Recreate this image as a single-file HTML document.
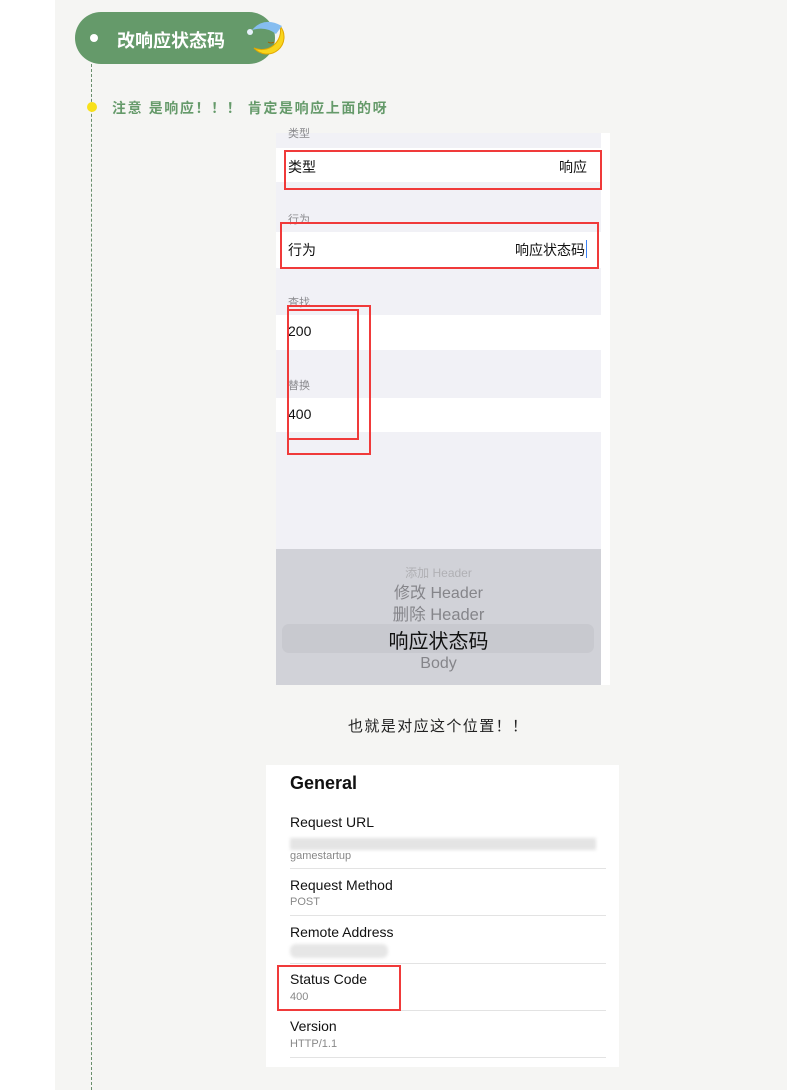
<!DOCTYPE html>
<html><head><meta charset="utf-8"><style>
*{margin:0;padding:0;box-sizing:border-box}
body{width:787px;height:1090px;position:relative;background:#fff;font-family:"Liberation Sans","Noto Sans CJK SC",sans-serif;overflow:hidden}
.a{position:absolute}
.bg{left:55px;top:0;width:732px;height:1090px;background:#f5f5f3}
.dash{left:91px;top:64px;height:1026px;border-left:1px dashed #6a8f6c}
.pill{left:75px;top:12px;width:200px;height:52px;background:#659a6a;border-radius:26px}
.rb{border:2px solid #f03a3a}
.lbl{font-size:11px;color:#8a8a8e}
.row{background:#fff;left:276px;width:325px}
.t{font-size:14px;color:#111}
.k{font-size:14px;color:#111;left:290px}
.v{font-size:11px;color:#888;left:290px}
.sep{left:290px;width:316px;height:1px;background:#e3e3e3}
</style></head><body>
<div class="a bg"></div>
<div class="a dash"></div>
<div class="a pill"></div>
<div class="a" style="left:90px;top:34px;width:8px;height:8px;border-radius:50%;background:#fff"></div>
<div class="a" style="left:117px;top:27px;font-size:18px;font-weight:bold;color:#fff">改响应状态码</div>
<svg class="a" style="left:240px;top:12px" width="50" height="52" viewBox="0 0 50 52">
<path d="M14 36 A17 17 0 1 0 40 14 A19 19 0 0 1 14 36Z" fill="#f9d51c" stroke="#e2a800" stroke-width="1"/>
<path d="M12 18 Q24 4 42 14 L36 22 Q26 14 12 18Z" fill="#86bdf0"/>
<circle cx="10" cy="20" r="3" fill="#e8f2fb"/>
<path d="M28 30 q3 2 6 0" stroke="#a06000" fill="none"/>
</svg>
<div class="a" style="left:87px;top:102px;width:10px;height:10px;border-radius:50%;background:#f8e11a"></div>
<div class="a" style="left:112px;top:98px;font-size:14px;letter-spacing:1.6px;font-weight:bold;color:#659a6a">注意 是响应！！！ 肯定是响应上面的呀</div>

<div class="a" style="left:276px;top:133px;width:334px;height:552px;background:#fff"></div>
<div class="a" style="left:276px;top:133px;width:325px;height:416px;background:#f1f1f6"></div>
<div class="a lbl" style="left:288px;top:125px">类型</div>
<div class="a row" style="top:148px;height:34px"></div>
<div class="a t" style="left:288px;top:157px">类型</div>
<div class="a t" style="left:559px;top:157px">响应</div>
<div class="a lbl" style="left:288px;top:211px">行为</div>
<div class="a row" style="top:232px;height:36px"></div>
<div class="a t" style="left:288px;top:240px">行为</div>
<div class="a t" style="left:515px;top:240px">响应状态码</div>
<div class="a" style="left:586px;top:240px;width:1px;height:18px;background:#3b82f6"></div>
<div class="a lbl" style="left:288px;top:294px">查找</div>
<div class="a row" style="top:315px;height:35px"></div>
<div class="a t" style="left:288px;top:323px">200</div>
<div class="a lbl" style="left:288px;top:377px">替换</div>
<div class="a row" style="top:398px;height:34px"></div>
<div class="a t" style="left:288px;top:406px">400</div>
<div class="a" style="left:276px;top:549px;width:325px;height:136px;background:#d1d2d8"></div>
<div class="a" style="left:282px;top:624px;width:312px;height:29px;border-radius:7px;background:#c8c9cf"></div>
<div class="a" style="left:276px;top:566px;width:325px;text-align:center;font-size:12px;color:#b0b0b4;line-height:14px">添加 Header</div>
<div class="a" style="left:276px;top:579px;width:325px;text-align:center;font-size:16px;color:#85858a">修改 Header</div>
<div class="a" style="left:276px;top:601px;width:325px;text-align:center;font-size:16.5px;color:#85858a">删除 Header</div>
<div class="a" style="left:276px;top:625px;width:325px;text-align:center;font-size:20px;color:#111">响应状态码</div>
<div class="a" style="left:276px;top:655px;width:325px;text-align:center;font-size:16px;color:#85858a">Body</div>
<div class="a rb" style="left:284px;top:150px;width:318px;height:40px"></div>
<div class="a rb" style="left:280px;top:222px;width:319px;height:47px"></div>
<div class="a rb" style="left:287px;top:305px;width:84px;height:150px"></div>
<div class="a rb" style="left:287px;top:309px;width:72px;height:131px"></div>

<div class="a" style="left:348px;top:715px;font-size:15px;letter-spacing:1.4px;color:#222">也就是对应这个位置！！</div>

<div class="a" style="left:266px;top:765px;width:353px;height:302px;background:#fff"></div>
<div class="a" style="left:290px;top:773px;font-size:18px;font-weight:bold;color:#111">General</div>
<div class="a k" style="top:814px">Request URL</div>
<div class="a" style="left:290px;top:838px;width:306px;height:12px;background:#e4e4e4;filter:blur(1.5px)"></div>
<div class="a v" style="top:850px">gamestartup</div>
<div class="a sep" style="top:868px"></div>
<div class="a k" style="top:877px">Request Method</div>
<div class="a v" style="top:896px">POST</div>
<div class="a sep" style="top:915px"></div>
<div class="a k" style="top:924px">Remote Address</div>
<div class="a" style="left:290px;top:944px;width:98px;height:14px;background:#e6e6e6;border-radius:6px;filter:blur(1.5px)"></div>
<div class="a sep" style="top:963px"></div>
<div class="a k" style="top:971px">Status Code</div>
<div class="a v" style="top:991px">400</div>
<div class="a sep" style="top:1010px"></div>
<div class="a k" style="top:1018px">Version</div>
<div class="a v" style="top:1038px">HTTP/1.1</div>
<div class="a sep" style="top:1057px"></div>
<div class="a rb" style="left:277px;top:965px;width:124px;height:46px"></div>
</body></html>
